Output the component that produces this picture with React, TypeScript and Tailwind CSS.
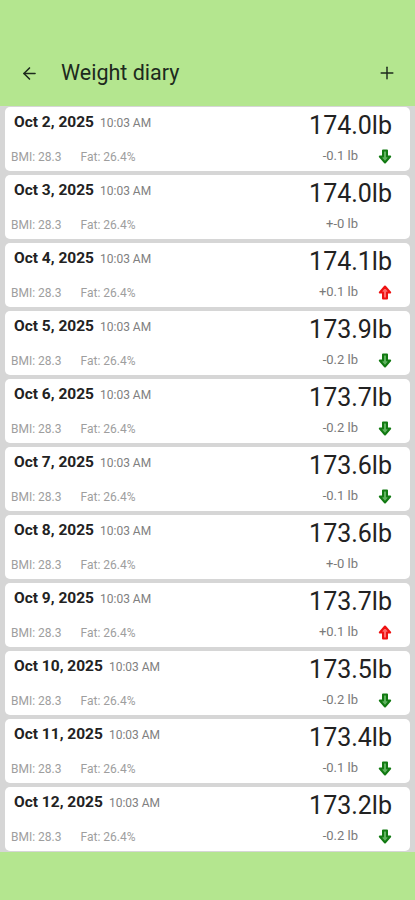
import { ArrowLeft, Plus } from "lucide-react";

type Entry = { date: string; weight: string; delta: string; dir: "down" | "up" | "none" };

const entries: Entry[] = [
  { date: "Oct 2, 2025", weight: "174.0lb", delta: "-0.1 lb", dir: "down" },
  { date: "Oct 3, 2025", weight: "174.0lb", delta: "+-0 lb", dir: "none" },
  { date: "Oct 4, 2025", weight: "174.1lb", delta: "+0.1 lb", dir: "up" },
  { date: "Oct 5, 2025", weight: "173.9lb", delta: "-0.2 lb", dir: "down" },
  { date: "Oct 6, 2025", weight: "173.7lb", delta: "-0.2 lb", dir: "down" },
  { date: "Oct 7, 2025", weight: "173.6lb", delta: "-0.1 lb", dir: "down" },
  { date: "Oct 8, 2025", weight: "173.6lb", delta: "+-0 lb", dir: "none" },
  { date: "Oct 9, 2025", weight: "173.7lb", delta: "+0.1 lb", dir: "up" },
  { date: "Oct 10, 2025", weight: "173.5lb", delta: "-0.2 lb", dir: "down" },
  { date: "Oct 11, 2025", weight: "173.4lb", delta: "-0.1 lb", dir: "down" },
  { date: "Oct 12, 2025", weight: "173.2lb", delta: "-0.2 lb", dir: "down" },
];

function TrendArrow({ dir }: { dir: "down" | "up" }) {
  const down = dir === "down";
  return (
    <svg width="14" height="15" viewBox="0 0 14 15" className={down ? "" : "rotate-180"}>
      <path
        d="M5 1.5h4v6h3.2L7 13.5 1.8 7.5H5z"
        fill={down ? "#5fb35f" : "#ff6b6b"}
        stroke={down ? "#127a12" : "#ee1111"}
        strokeWidth="2"
        strokeLinejoin="round"
      />
    </svg>
  );
}

function Row({ e }: { e: Entry }) {
  return (
    <div className="h-[64px] rounded-[5px] bg-white pl-[9px] pr-[18px] pt-[4px]">
      <div className="flex h-[30px] items-start justify-between">
        <div className="mt-[1px] flex items-baseline gap-[6px] leading-[20px]">
          <span className="text-[15.5px] font-bold text-[#222]">{e.date}</span>
          <span className="text-[12px] text-[#808080]">10:03 AM</span>
        </div>
        <span className="text-[25px] leading-[30px] text-[#222]">{e.weight}</span>
      </div>
      <div className="mt-[7px] flex h-[18px] items-center justify-between leading-[18px]">
        <div className="-ml-[3px] flex gap-[19px] text-[12px] text-[#9e9e9e]">
          <span>BMI: 28.3</span>
          <span>Fat: 26.4%</span>
        </div>
        <div className="flex items-center">
          <span className="-mt-[2px] text-[13px] text-[#7a7a7a]">{e.delta}</span>
          {e.dir === "none" ? (
            <span className="w-[34px]" />
          ) : (
            <span className="ml-[20px] -mt-[1px] flex">
              <TrendArrow dir={e.dir} />
            </span>
          )}
        </div>
      </div>
    </div>
  );
}

export default function App() {
  return (
    <div className="min-h-[900px] bg-[#b4e68f] font-['Roboto',sans-serif]">
      <header className="h-[106px]">
        <div className="flex h-12 translate-y-[49px] items-center px-[20px] text-[#1d2a1d]">
          <ArrowLeft size={19} strokeWidth={2} className="mr-[22px]" />
          <h1 className="text-[21.5px] leading-none">Weight diary</h1>
          <Plus size={20} strokeWidth={1.75} className="ml-auto mr-[-2px]" />
        </div>
      </header>
      <div className="flex flex-col gap-[4px] bg-[#d6d6d6] px-[5px] py-[1px]">
        {entries.map((e) => (
          <Row key={e.date} e={e} />
        ))}
      </div>
    </div>
  );
}
